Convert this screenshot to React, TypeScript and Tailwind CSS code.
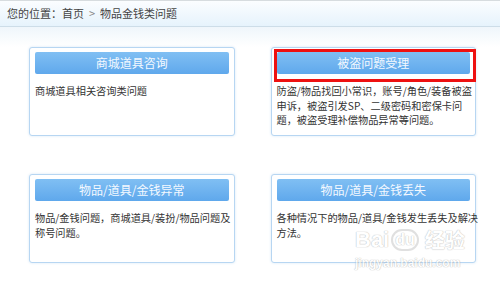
import React from "react";

type Card = {
  title: string;
  lines: string[];
  marked?: boolean;
};

const cards: Card[] = [
  { title: "商城道具咨询", lines: ["商城道具相关咨询类问题"] },
  {
    title: "被盗问题受理",
    lines: [
      "防盗/物品找回小常识，账号/角色/装备被盗",
      "申诉，被盗引发SP、二级密码和密保卡问",
      "题，被盗受理补偿物品异常等问题。",
    ],
    marked: true,
  },
  {
    title: "物品/道具/金钱异常",
    lines: ["物品/金钱问题，商城道具/装扮/物品问题及", "称号问题。"],
  },
  {
    title: "物品/道具/金钱丢失",
    lines: ["各种情况下的物品/道具/金钱发生丢失及解决", "方法。"],
  },
];

const font = { fontFamily: '"Noto Sans CJK SC", "Liberation Sans", sans-serif' };

const CardBox = ({ card }: { card: Card }) => {
  return (
    <div className="relative h-[89px] rounded-[3px] border border-[#b7d6f2] bg-white px-[5px] pt-[4px] shadow-[0_0_3px_#d6e8f7]">
      <div className="flex h-[22px] items-center justify-center rounded-[2px] bg-gradient-to-b from-[#80bff3] to-[#5fa8ec] text-[12px] text-[#f4f9ff]">
        {card.title}
      </div>
      <div className="mt-[10px] whitespace-nowrap text-[10.2px] leading-[14.5px] text-[#333]">
        {card.lines.map((l, i) => (
          <div key={i}>{l}</div>
        ))}
      </div>
      {card.marked && (
        <div className="absolute left-[2px] top-[1px] h-[33px] w-[202px] border-[3px] border-[#ee1111]" />
      )}
    </div>
  );
};

export default function App() {
  return (
    <div className="relative h-[295px] w-[500px] overflow-hidden bg-white" style={font}>
      <div className="flex h-[27px] items-center border-t border-b border-t-[#d7dcdf] border-b-[#cddde8] bg-gradient-to-b from-[#fbfdff] to-[#e6f3fc] pl-[7px] text-[11px] text-[#444]">
        <span>您的位置：首页</span>
        <span className="mx-[5px] text-[#888]">&gt;</span>
        <span>物品金钱类问题</span>
      </div>
      <div className="bg-gradient-to-b from-[#eff6fb] to-white to-[20px]">
        <div className="grid grid-cols-2 gap-x-[36px] gap-y-[38px] pl-[29px] pr-[24px] pt-[20px]">
          {cards.map((c, i) => (
            <CardBox key={i} card={c} />
          ))}
        </div>
      </div>
      <div className="pointer-events-none absolute left-[355px] top-[228px] flex flex-col items-start opacity-60">
        <div className="flex items-center text-[22px] font-bold leading-[24px] text-white [text-shadow:0_0_1px_#999,0_0_1px_#999]">
          <span style={{ fontFamily: '"Liberation Sans", sans-serif' }}>Bai</span>
          <span className="ml-[2px] rounded-full border-2 border-[#ccc] px-[2px] text-[16px] leading-[18px]" style={{ fontFamily: '"Liberation Sans", sans-serif' }}>du</span>
          <span className="ml-[6px] text-[20px]">经验</span>
        </div>
        <div className="mt-[4px] text-[12px] font-bold leading-[14px] text-white [text-shadow:0_0_1px_#999,0_0_1px_#999]" style={{ fontFamily: '"Liberation Sans", sans-serif' }}>
          jingyan.baidu.com
        </div>
      </div>
    </div>
  );
}
